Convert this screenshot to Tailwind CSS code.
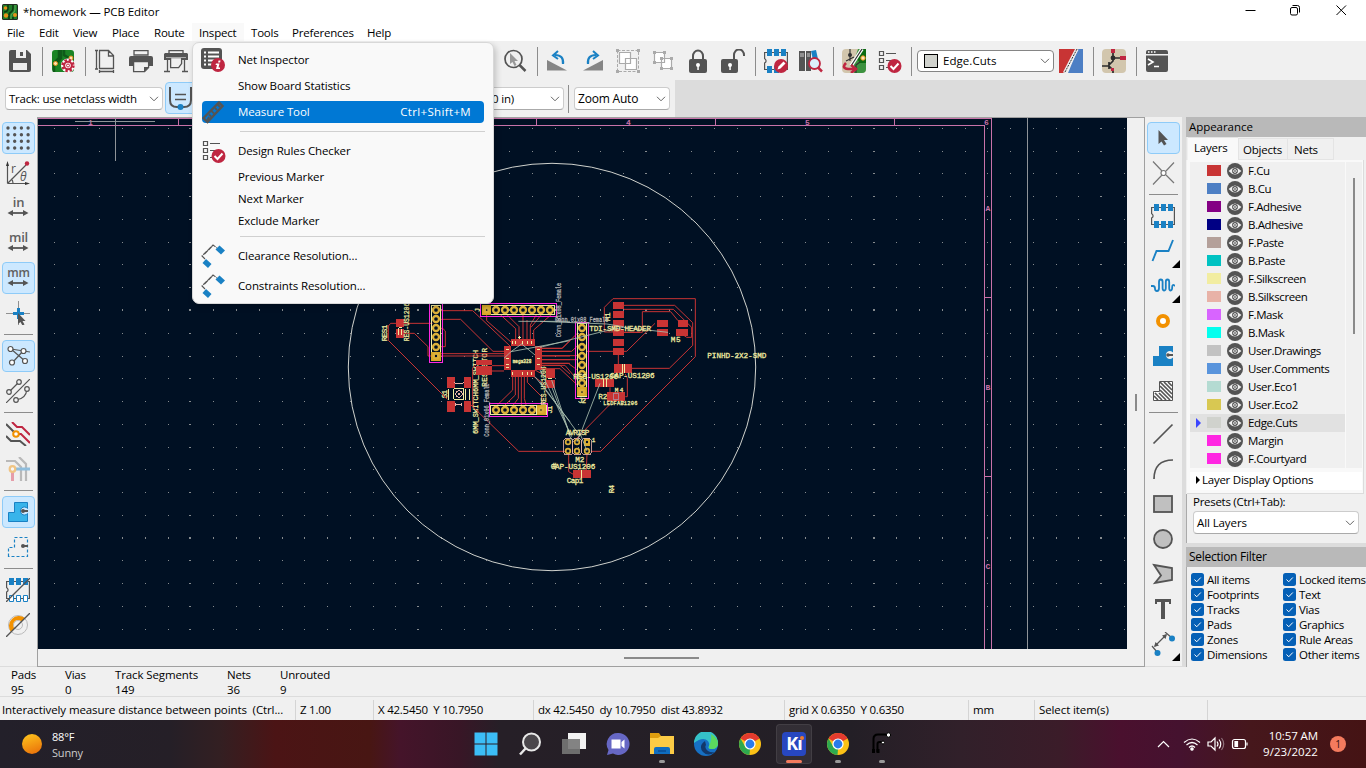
<!DOCTYPE html>
<html lang="en">
<head>
<meta charset="utf-8">
<title>homework — PCB Editor</title>
<script src="https://cdn.jsdelivr.net/npm/@tailwindcss/browser@4"></script>
</head>
<body class="w-[1366px] h-[768px] overflow-hidden bg-[#f0f0f0] text-black text-[11.5px] leading-[16px] tracking-[-0.2px] font-['Open_Sans','Noto_Sans',sans-serif] flex flex-col relative whitespace-nowrap">

<svg class="hidden">
  <defs>
    <symbol id="eye" viewBox="0 0 16 16"><circle cx="8" cy="8" r="8" fill="#545454"/><path d="M1.600 8Q8 1 14.400 8Q8 15 1.600 8Z" fill="#f0f0f0"/><circle cx="8" cy="8" r="2.900" fill="#545454"/><circle cx="8" cy="8" r="1.400" fill="none" stroke="#f0f0f0" stroke-width=".9"/></symbol>
    <symbol id="chev" viewBox="0 0 10 6"><path d="M1 .8L5 4.800L9 .8" fill="none" stroke="#666" stroke-width="1"/></symbol>
    <symbol id="drc" viewBox="0 0 24 24"><g fill="none" stroke="#545454" stroke-width="1.200"><path d="M1.500 2.500h4v4h-4zM1.500 9.500h4v4h-4zM1.500 16.500h4v4h-4zM8 4.500h10M8 11.500h5M8 18.500h2"/></g><circle cx="16.500" cy="17" r="7" fill="#bf2641"/><path d="M12.500 17l3 3l5-5.500" fill="none" stroke="#fff" stroke-width="2"/></symbol>
    <symbol id="clr" viewBox="0 0 24 24"><path d="M4 15L1 12L12 1l4 3M3.500 10l8-8" fill="none" stroke="#545454" stroke-width="1.100" stroke-dasharray="5 1"/><path d="M18.500 1.500L24 6.500L20 10.500L14.500 5.500ZM5 15L10.500 20L7 24L1.500 19Z" fill="#1a81c4"/></symbol>
    <symbol id="dbl" viewBox="0 0 24 8"><path d="M5 4H19" stroke="#545454" stroke-width="1.800"/><path d="M1.500 4L7 1V7ZM22.500 4L17 1V7Z" fill="#545454"/></symbol>
    <symbol id="chrome" viewBox="0 0 24 24"><circle cx="12" cy="12" r="11" fill="#fbc116"/><path d="M12 12L2.500 6.500A11 11 0 0 1 21.500 6.500Z" fill="#e33b2e"/><path d="M12 1a11 11 0 0 1 9.600 6H12Z" fill="#e33b2e"/><path d="M2.500 6.500L7.700 15.500L12 17L11.500 23A11 11 0 0 1 2.500 6.500Z" fill="#2da94f"/><circle cx="12" cy="12" r="5.600" fill="#fff"/><circle cx="12" cy="12" r="4.400" fill="#2a7bea"/></symbol>
  </defs>
</svg>

<!-- Title bar -->
<header class="h-[23px] bg-white flex items-center shrink-0">
  <svg class="ml-[2px] w-4 h-4" viewBox="0 0 16 16"><rect width="16" height="16" rx="1.500" fill="#222d22"/><rect x="1" y="1" width="14" height="14" fill="#1f7d28"/><path d="M2 8q4 0 4-4V1M7 15v-4q0-2 2-3t2-4V1M11 15v-2" stroke="#0d3a12" stroke-width="1.600" fill="none"/><path d="M9 15v-3q0-2 2-3t2-4V1" stroke="#52a552" stroke-width="1.200" fill="none"/><circle cx="3.500" cy="4" r="1.800" fill="#e8921a"/><circle cx="4" cy="11.500" r="2.200" fill="#e8921a"/><circle cx="13" cy="11" r="2" fill="#e8921a"/></svg>
  <span class="ml-[5px] mt-px tracking-[-0.08px]">*homework — PCB Editor</span>
  <svg class="ml-auto mr-[17px] w-[105px] h-3 -mt-[3px]" viewBox="0 0 105 12" fill="none" stroke="#000" stroke-width="1"><path d="M1.500 6.500h10M92.500 1.500l9.500 9.500M102 1.500l-9.500 9.500"/><rect x="46.500" y="3.500" width="7" height="7.500" rx="1.500"/><path d="M48.500 1.500h5q2 0 2 2v5"/></svg>
</header>

<!-- Menu bar -->
<nav class="h-[18px] bg-white flex shrink-0 pl-px leading-[20px]">
  <span class="w-[32px] pl-[6px]">File</span><span class="w-[34px] pl-[6px]">Edit</span><span class="w-[39px] pl-[6px]">View</span><span class="w-[42px] pl-[6px]">Place</span><span class="w-[44px] pl-[6px]">Route</span><span class="w-[52px] h-full bg-[#f9f9f9] pl-[7px]">Inspect</span><span class="w-[41px] pl-[7px]">Tools</span><span class="w-[75px] pl-[7px] tracking-[-0.2px]">Preferences</span><span class="pl-[7px]">Help</span>
</nav>

<!-- Main toolbar -->
<div class="h-[39px] shrink-0 flex items-start pl-[3px] [&>svg]:w-6 [&>svg]:h-6 [&>svg]:ml-[5px] [&>svg]:mr-[6px] [&>svg]:mt-2 [&>svg]:shrink-0 [&>i]:w-px [&>i]:h-[29px] [&>i]:bg-[#8c8c8c] [&>i]:ml-1 [&>i]:mr-[3px] [&>i]:mt-[6px] [&>i]:shrink-0">
  <svg viewBox="0 0 24 24"><path fill="#545454" d="M1 3a2 2 0 0 1 2-2h16l4 4v16a2 2 0 0 1-2 2H3a2 2 0 0 1-2-2Z"/><path fill="#f0f0f0" d="M8 1h10v8H8zM5 14h14v7H5z"/><path fill="#545454" d="M12 3h3v4h-3z"/></svg>
  <i></i>
  <svg viewBox="0 0 24 24"><rect x="1" y="1" width="22" height="22" rx="3" fill="#1b8425"/><path d="M3 23V14l5-5V1M10 1v8l-4 5M13 1v5l5 3h5" stroke="#0f5a19" stroke-width="2.500" fill="none"/><circle cx="4.500" cy="14.500" r="2" fill="#ffe2b0" stroke="#e8921a"/><circle cx="20" cy="9" r="2" fill="#ffe2b0" stroke="#e8921a"/><circle cx="17" cy="16.500" r="7" fill="#fff"/><circle cx="17" cy="16.500" r="5.200" fill="none" stroke="#bf2641" stroke-width="3" stroke-dasharray="2.300 1.800"/><circle cx="17" cy="16.500" r="3.800" fill="#fff" stroke="#bf2641" stroke-width="2"/><circle cx="17" cy="16.500" r="1.500" fill="none" stroke="#bf2641"/></svg>
  <i></i>
  <svg viewBox="0 0 24 24" fill="none" stroke="#545454" stroke-width="1.300"><path d="M5.500 1.500h9l5 5v13h-14zM14.500 2v5h5M2.500 1v19M1 1.500h3M1 20h3M5 22.500h15M5.500 21v3M19.500 21v3"/></svg>
  <svg viewBox="0 0 24 24"><path d="M5 1.600h14V6H5z" fill="none" stroke="#545454" stroke-width="1.300"/><path d="M2 7h20q2 0 2 2v8h-4v-5H4v5H0V9q0-2 2-2Z" fill="#545454"/><path d="M4.600 12.600h15v6l-4 4h-11z" fill="#f0f0f0" stroke="#545454" stroke-width="1.300"/><path d="M15 23v-5h5z" fill="#545454"/></svg>
  <svg viewBox="0 0 24 24"><path d="M5 1.600h14V5H5zM3.500 11v11M20.500 11v11M0 22.500h6M18 22.500h6" fill="none" stroke="#545454" stroke-width="1.300"/><path d="M1 4h22l1 1v6H0V5z" fill="#545454"/><path d="M6.600 8.600h11v6l-3 4h-8z" fill="#f0f0f0" stroke="#545454" stroke-width="1.300"/><path d="M2 8.500h20" stroke="#aaa"/></svg>
  <div class="w-[304px] shrink-0"></div>
  <svg viewBox="0 0 24 24"><circle cx="10.500" cy="10" r="8.500" fill="none" stroke="#545454" stroke-width="1.700"/><path d="M16.500 16l6 6" stroke="#545454" stroke-width="2.500"/><path d="M7 4v11l2.500-2 2 4 2-1-2-4h3.500z" fill="#999"/></svg>
  <i></i>
  <svg viewBox="0 0 24 24"><path d="M1 11v10.500h20z" fill="#858585"/><path d="M17 15Q18 6 9 6" fill="none" stroke="#1a81c4" stroke-width="2.200"/><path d="M12 2L7 6.500L12 10" fill="none" stroke="#1a81c4" stroke-width="2"/></svg>
  <svg viewBox="0 0 24 24"><path d="M22 11v10.500H2z" fill="#858585"/><path d="M7 15Q6 6 15 6" fill="none" stroke="#1a81c4" stroke-width="2.200"/><path d="M12 2L17 6.500L12 10" fill="none" stroke="#1a81c4" stroke-width="2"/></svg>
  <svg viewBox="0 0 24 24"><path d="M1.500 1.500h21v21h-21z" fill="none" stroke="#aaa" stroke-dasharray="3 1.500"/><path d="M0 0h3v3H0zM21 0h3v3h-3zM0 21h3v3H0zM21 21h3v3h-3z" fill="#aaa"/><path d="M3.500 3.500h11v11h-11zM9.500 9.500h11v11h-11z" fill="#fff" stroke="#aaa" stroke-width="1.200"/></svg>
  <svg viewBox="0 0 24 24"><path d="M3.500 3.500h10v10h-10zM10.500 9.500h10v10h-10z" fill="#fff" stroke="#aaa" stroke-width="1.200"/><path d="M2 2h3v3H2zM12 2h3v3h-3zM2 12h3v3H2zM9 8h3v3H9zM19 8h3v3h-3zM9 18h3v3H9zM19 18h3v3h-3z" fill="#aaa"/></svg>
  <svg viewBox="0 0 24 24"><path d="M7 11V7a5 5.500 0 0 1 10 0v4" fill="none" stroke="#545454" stroke-width="2"/><rect x="3" y="10" width="18" height="14" rx="2" fill="#545454"/><circle cx="12" cy="16" r="2" fill="#fff"/><path d="M11.300 17h1.500v4h-1.500z" fill="#fff"/></svg>
  <svg viewBox="0 0 24 24"><path d="M13 11V6a5 5.500 0 0 1 10 0v1" fill="none" stroke="#545454" stroke-width="2"/><rect x="0" y="10" width="17" height="14" rx="2" fill="#545454"/><circle cx="9" cy="16" r="2" fill="#fff"/><path d="M8.300 17h1.500v4H8.300z" fill="#fff"/></svg>
  <i></i>
  <svg viewBox="0 0 24 24"><path d="M.6 3.500h22.800v17H.6V14q3-2 0-4.500z" fill="none" stroke="#545454" stroke-width="1.200"/><path d="M3 0h5v7H3zM10 0h5v7h-5zM17 0h5v7h-5zM3 17h5v7H3zM10 17h5v7h-5z" fill="#1a81c4"/><circle cx="17" cy="17" r="7" fill="#bf2641"/><path d="M13.500 20.500l1-3 5-5 2 2-5 5z" fill="#fff"/></svg>
  <svg viewBox="0 0 24 24"><path d="M0 2h6v20H0zM7 2h5v20H7z" fill="#545454"/><path d="M12 2l5-1 4 18-5 1z" fill="#1a81c4"/><path d="M1 5h4M1 7h4M8 5h3M8 7h3" stroke="#ccc"/><circle cx="15.500" cy="14.500" r="5.500" fill="#dceefa" stroke="#bf2641" stroke-width="1.800"/><path d="M19 18.500l4 4" stroke="#bf2641" stroke-width="2.500"/></svg>
  <i></i>
  <svg viewBox="0 0 24 24"><rect width="24" height="24" rx="4" fill="#d2c6ad"/><path d="M16 0h4q4 0 4 4v16q0 4-4 4h-8V12z" fill="#3c923f"/><path d="M20 0h4v14h-6l-3-4z" fill="#0c6b12"/><path d="M20 0L9 17" stroke="#fff" stroke-width="3.500"/><path d="M20 0L9 17M8 0v12M4 12l8-4M14 24v-8l4-3" stroke="#333" stroke-width="1.200" fill="none"/><circle cx="8" cy="6" r="2" fill="#333"/><circle cx="21" cy="9" r="2.200" fill="#ffe2b0" stroke="#e8921a"/><path d="M4 14q-5 5 2 6h7M9 16l5 4-5 4" fill="none" stroke="#bf2641" stroke-width="2.600"/></svg>
  <svg class="relative left-px"><use href="#drc"/></svg>
  <i></i>
  <div class="ml-[2px] mt-[9px] w-[137px] h-[22px] shrink-0 bg-white border border-[#858585] rounded-sm flex items-center pl-[6px]"><b class="w-[14px] h-[14px] bg-[#d0d2cd] border border-black"></b><span class="ml-[5px] tracking-[0.05px]">Edge.Cuts</span><svg class="ml-auto mr-[3px] w-[10px] h-[6px]"><use href="#chev"/></svg></div>
  <svg viewBox="0 0 24 24"><path d="M0 0h19L6 24H0z" fill="#c83434"/><path d="M19 0h5v24H9z" fill="#4d7fc4"/><path d="M18 0L5.500 24" stroke="#eee" stroke-width="3.500"/><path d="M18 0L5.500 24" stroke="#333" stroke-width="1" stroke-dasharray="2 1"/></svg>
  <i></i>
  <svg viewBox="0 0 24 24"><rect width="24" height="24" rx="4" fill="#d2c6ad"/><path d="M11 3v7M12 9h8M11 9v3l-4 4M0 17h7M7 13v7M7 17l4 4v3" stroke="#2c2c2c" stroke-width="1.700" fill="none"/><circle cx="11" cy="9" r="2.400" fill="#2c2c2c"/><path d="M9 0h4v4H9zM18 7h6v4h-6zM9 19h3v3H9z" fill="#bf2641"/></svg>
  <i></i>
  <svg viewBox="0 0 24 24"><path d="M1 5V3q0-2 2-2h18q2 0 2 2v2zM1 6.500h22V21q0 2-2 2H3q-2 0-2-2z" fill="#545454"/><path d="M3 10l5 3-5 3M9 17.500h5" stroke="#fff" stroke-width="1.600" fill="none"/><path d="M3 3h1.500M6 3h1.500M9 3h1.500" stroke="#fff" stroke-width="1.500"/></svg>
</div>

<!-- Track / zoom toolbar -->
<div class="h-[37px] shrink-0 flex bg-[#dcdcdc]">
  <div class="w-[675px] bg-[#f0f0f0] flex items-start">
    <div class="ml-[5px] mt-[7px] w-[158px] h-[23px] bg-white border border-[#ccc] border-b-[#aaa] rounded-sm flex items-center pl-[3px] tracking-[-0.22px]">Track: use netclass width<svg class="ml-auto mr-[3px] w-[10px] h-[6px]"><use href="#chev"/></svg></div>
    <div class="ml-[2px] mt-[2px] w-8 h-8 bg-[#cce8ff] border border-[#8ecbf8] rounded-sm"><svg class="w-[30px] h-[30px]" viewBox="0 0 30 30"><path d="M4 4v13q0 7 7 7h7q7 0 7-7V4" fill="none" stroke="#545454" stroke-width="2"/><path d="M9 11.500h11M9 16.500h11" stroke="#545454" stroke-width="1.300"/><circle cx="14.500" cy="24" r="3" fill="#1a81c4"/></svg></div>
    <div class="ml-[193px] mt-[7px] w-[174px] h-[23px] bg-white border border-[#ccc] border-b-[#aaa] rounded-sm flex items-center justify-end">100.00 mils (2.540 in)<svg class="ml-[36px] mr-[3px] w-[10px] h-[6px]"><use href="#chev"/></svg></div>
    <div class="ml-1 mt-[5px] w-px h-[28px] bg-[#8c8c8c]"></div>
    <div class="ml-[5px] mt-[7px] w-[96px] h-[23px] bg-white border border-[#ccc] border-b-[#aaa] rounded-sm flex items-center pl-[3px] text-[12px]">Zoom Auto<svg class="ml-auto mr-[3px] w-[10px] h-[6px]"><use href="#chev"/></svg></div>
  </div>
</div>

<!-- Work area -->
<main class="h-[550px] shrink-0 flex">
  <!-- Display options toolbar -->
  <div class="w-[37px] pt-[3px] border-b border-[#dcdcdc] flex flex-col [&>div]:ml-[2px] [&>div]:mt-[2px] [&>div]:mb-px [&>div]:w-[33px] [&>div]:h-[32px] [&>div]:p-[3px] [&>div]:border [&>div]:rounded-sm [&>div]:shrink-0 [&>i]:h-px [&>i]:w-[29px] [&>i]:ml-1 [&>i]:bg-[#8c8c8c] [&>i]:mt-[4px] [&>i]:mb-[3px] [&>i]:shrink-0 [&>div>svg]:w-6 [&>div>svg]:h-6">
    <div class="bg-[#cce8ff] border-[#8ecbf8]"><svg viewBox="0 0 24 24"><g stroke="#545454" stroke-width="3.400" stroke-linecap="round" stroke-dasharray="0 6.700"><path d="M2 2H23M2 8.700H23M2 15.300H23M2 22H23"/></g></svg></div>
    <div class="border-transparent"><svg viewBox="0 0 24 24"><path d="M1.500 22.500V3M1.500 22.500H21M2 22L20 4M7 22q0-3-2-4" fill="none" stroke="#545454" stroke-width="1.200"/><path d="M1.500 0L3 5H0ZM24 22.500L19 21v3z" fill="#333"/><circle cx="21" cy="2.500" r="2.200" fill="#bf2641"/><text x="5" y="12" font-size="12" fill="#545454">r</text><text x="14" y="20" font-size="12" font-style="italic" fill="#545454">θ</text></svg></div>
    <div class="border-transparent relative text-center text-[13px] leading-[12px] font-semibold text-[#606060] !px-0">in<svg class="absolute left-[3px] top-[16px] !h-[8px]"><use href="#dbl"/></svg></div>
    <div class="border-transparent relative text-center text-[13px] leading-[12px] font-semibold text-[#606060] !px-0">mil<svg class="absolute left-[3px] top-[16px] !h-[8px]"><use href="#dbl"/></svg></div>
    <div class="bg-[#cce8ff] border-[#8ecbf8] relative text-center text-[12px] leading-[14px] font-semibold text-[#606060] !px-0">mm<svg class="absolute left-[3px] top-[16px] !h-[8px]"><use href="#dbl"/></svg></div>
    <div class="border-transparent"><svg viewBox="0 0 24 24"><path d="M0 12.500h24M12.500 0v24" stroke="#777" stroke-width=".8"/><path d="M12.500 7v11M7 12.500h11" stroke="#1a81c4" stroke-width="3"/><path d="M12 12v11l2.500-2 2 3.500 2-1-2-3.500h3z" fill="#545454"/></svg></div>
    <i></i>
    <div class="bg-[#cce8ff] border-[#8ecbf8]"><svg viewBox="0 0 24 24" fill="#fff" stroke="#545454" stroke-width="1.200"><path d="M5 5l19 3M5 5l14 12M6 19L18 6"/><circle cx="4.500" cy="5" r="2.500"/><circle cx="17.500" cy="7" r="2.500"/><circle cx="6" cy="18.500" r="2.500"/><circle cx="19" cy="17" r="2.500"/></svg></div>
    <div class="border-transparent"><svg viewBox="0 0 24 24" fill="#f0f0f0" stroke="#545454" stroke-width="1.200"><path d="M0 24L24 0M4 12l8-8"/><path d="M10 21q10-1 11-11" fill="none"/><circle cx="3" cy="13" r="2.300"/><circle cx="13" cy="3" r="2.300"/><circle cx="10" cy="21" r="2.300"/><circle cx="21" cy="10" r="2.300"/></svg></div>
    <i></i>
    <div class="border-transparent"><svg viewBox="0 0 24 24" fill="none" stroke-width="2"><path d="M6 0l5 5h5l8 8M10 12h5l9 9" stroke="#bf2641"/><path d="M0 2l9 9M0 14l5 5h9l6 5" stroke="#545454"/><circle cx="10" cy="12" r="2.800" fill="#fff" stroke="#f29100"/></svg></div>
    <div class="border-transparent"><svg viewBox="0 0 24 24" fill="none" stroke-width="2.200" opacity=".45"><path d="M0 4h9l6 6v14M13 0l7 7v17" stroke="#777"/><path d="M8 12h16" stroke="#1a81c4" stroke-width="3"/><path d="M6.500 13v11" stroke="#dc3a55" stroke-width="3"/><circle cx="6.500" cy="12" r="2.800" fill="#fff" stroke="#f29100"/></svg></div>
    <i></i>
    <div class="bg-[#cce8ff] border-[#8ecbf8]"><svg viewBox="0 0 24 24"><path d="M2.500 21.500v-9h6v-10h13v6a4 4 0 1 0 0 5v8z" fill="#39b4ea" stroke="#1a81c4"/><path d="M17 11h5" stroke="#545454" stroke-width="2"/><circle cx="17" cy="11" r="2" fill="#545454"/></svg></div>
    <div class="border-transparent"><svg viewBox="0 0 24 24"><path d="M2.500 21.500v-9h6v-10h13v19z" fill="none" stroke="#1a81c4" stroke-width="1.200" stroke-dasharray="3 2"/><path d="M17 11h5" stroke="#545454" stroke-width="2"/><circle cx="17" cy="11" r="2" fill="#545454"/></svg></div>
    <i></i>
    <div class="border-transparent"><svg viewBox="0 0 24 24"><path d="M.6 3.500h22.800v17H.6V14q3-2 0-4.500z" fill="none" stroke="#545454" stroke-width="1.200"/><path d="M3 0h5v7H3zM10 0h5v7h-5zM17 0h5v7h-5z" fill="#1a81c4"/><path d="M3.500 17.500h4v6h-4zM10.500 17.500h4v6h-4zM17.500 17.500h4v6h-4z" fill="#fff" stroke="#1a81c4"/><path d="M0 24L24 0" stroke="#545454" stroke-width="1.300"/></svg></div>
    <div class="border-transparent"><svg viewBox="0 0 24 24"><circle cx="12" cy="12" r="9.500" fill="none" stroke="#bbb"/><circle cx="12" cy="12" r="4.500" fill="none" stroke="#bbb"/><path d="M5 19A10 10 0 0 1 19 5L15.500 8.500A4.500 4.500 0 0 0 8.500 15.500Z" fill="#f29100"/><path d="M0 24L24 0" stroke="#545454" stroke-width="1.300"/></svg></div>
  </div>

  <!-- Board canvas with its scrollbars -->
  <div class="w-[1108px] border border-[#a0a0a0] grid grid-cols-[1089px_1fr] grid-rows-[531px_1fr]">
    <svg id="board" class="w-[1089px] h-[531px] bg-[#001023] tracking-normal" viewBox="38 118 1089 531" font-family="'Liberation Mono',monospace" shape-rendering="crispEdges">
      <path id="dots" fill="#868b8e"/>
      <g fill="none" stroke="#c872a9"><path d="M38 118.500H991.500V649M38 125.500H984.500V649M178.500 118v7M536.500 118v7M715.500 118v7M894.500 118v7M984 297.500h7M984 476.500h7"/></g>
      <g fill="#c872a9" font-size="8" font-weight="bold"><text x="88" y="125">1</text><text x="626" y="125">4</text><text x="805" y="125">5</text><text x="984" y="125">6</text><text x="985.500" y="211">A</text><text x="985.500" y="390">B</text><text x="985.500" y="569">C</text></g>
      <path d="M75 121.500h80M115.500 118v43M1027.500 118v531" stroke="#8f9498"/>
      <circle cx="552" cy="367" r="203.700" fill="none" stroke="#d0d2cd" shape-rendering="auto"/>

      <!-- left half of the board -->
      <g transform="translate(370 270) scale(.33333)">
        <g fill="#f2eda1" stroke="#f2eda1" stroke-width=".8" font-size="23">
          <text transform="translate(50 214) rotate(-90)" textLength="50">RES1</text>
          <text transform="translate(230 385) rotate(-90)" textLength="25">S1</text>
          <text transform="translate(323 492) rotate(-90)" textLength="252" lengthAdjust="spacingAndGlyphs">6MM_SWITCH6MM_SWITCH</text>
          <text transform="translate(350 350) rotate(-90)" textLength="116">RESISTOR</text>
          <text transform="translate(547 431) rotate(-90)" textLength="24">J1</text>
        </g>
        <g fill="none" stroke="#c83434" stroke-width="3" shape-rendering="auto">
          <path d="M78 160H62L55 168V211L232 388M303 405L446 544H512M102 160H188M102 190H133L174 230V258H186M212 122H308L420 228M212 148H272L369 244H402M212 175H218L226 183V230H212M212 251H402M212 258H402M366 287H402M366 303H402M317 285L308 294V410"/>
          <path d="M350 133V152L425 218M390 133L437 176V207M410 133L447 170V207M459 130V207M471 150V207M500 133L481 165V207M515 133L483 172M545 133L491 180V207"/>
          <path d="M516 235H577L600 212M516 244H600M516 258H600M516 269H600M516 280H600M516 286H570L600 312M495 300L527 318"/>
          <path d="M428 320V360L382 405M436 320V375L405 405M445 320V385L430 405M454 320V405M463 320V385L468 405M472 320V337L515 380V405M492 320L527 345"/>
        </g>
        <g fill="none" stroke="#ff26e2" stroke-width="3"><rect x="179" y="102" width="38" height="175"/><rect x="331" y="101" width="228" height="38"/><rect x="359" y="401" width="174" height="38"/></g>
        <g fill="none" stroke="#f2eda1" stroke-width="3"><rect x="185" y="107" width="27" height="164"/><rect x="337" y="106" width="217" height="29"/><rect x="363" y="406" width="166" height="29"/><path d="M500 406v29"/></g>
        <path d="M184 246h28v26h-28zM336 106h28v28h-28zM500 406h27v28h-27z" fill="#d9a927"/>
        <g fill="#001023" stroke="#dcb13a" stroke-width="7" shape-rendering="auto"><circle cx="198" cy="120" r="9"/><circle cx="198" cy="147" r="9"/><circle cx="198" cy="174" r="9"/><circle cx="198" cy="201" r="9"/><circle cx="198" cy="231" r="9"/><circle cx="198" cy="258" r="7"/><circle cx="378" cy="120" r="9"/><circle cx="405" cy="120" r="9"/><circle cx="432" cy="120" r="9"/><circle cx="459" cy="120" r="9"/><circle cx="486" cy="120" r="9"/><circle cx="513" cy="120" r="9"/><circle cx="540" cy="120" r="9"/><circle cx="350" cy="120" r="6"/><circle cx="378" cy="420" r="9"/><circle cx="405" cy="420" r="9"/><circle cx="432" cy="420" r="9"/><circle cx="459" cy="420" r="9"/><circle cx="486" cy="420" r="9"/><circle cx="513" cy="420" r="6"/></g>
        <path d="M78 147h24v24H78zM78 178h24v25H78zM231 321h24v33h-24zM281 321h22v33h-22zM231 393h24v32h-24zM281 393h22v32h-22zM317 270h49v15h-49zM317 288h49v26h-49zM423 207h72v21h-72zM423 300h72v21h-72zM402 228h21v72h-21zM495 228h21v72h-21zM527 297h27v27h-27zM527 330h27v23h-27z" fill="#c83434"/>
        <g fill="none" stroke="#f2eda1" stroke-width="3"><path d="M252 357h30v31h-30zM237 357v33M288 357v33M298 357v33M87 173h9M87 173v22M96 178v16M428 213v10M438 213v10M458 213v10M472 213v10M485 213v10M428 305v10M458 305v10M472 305v10M485 305v10M408 240h10M408 266h10M408 283h10M408 293h10M500 240h10M500 266h10M500 283h10M535 327h12M449 198v10M445 203h8"/></g>
        <g fill="none" stroke="#e8b2a7" stroke-width="3"><circle cx="267" cy="372" r="10"/><path d="M258 342h18M258 403h18M252 336l6 6M282 336l-6 6M258 398v10M276 398v10"/></g><circle cx="267" cy="372" r="4" fill="#e8b2a7"/>
        <path d="M423 245L455 222L495 255M423 245L600 212M445 154H600M495 320L600 455M545 350L600 495M423 245L402 265" stroke="#a9bfb0" stroke-width="2.500" fill="none" shape-rendering="auto"/>
        <g fill="#f2eda1" stroke="#f2eda1" stroke-width=".8" font-size="23">
          <text transform="translate(117 214) rotate(-90)" textLength="116" lengthAdjust="spacingAndGlyphs">RES-US1206</text>
          <text transform="translate(528 405) rotate(-90)" textLength="116" lengthAdjust="spacingAndGlyphs">RES-US1206</text>
          <text transform="translate(331 126) rotate(-90)" font-size="20">J</text>
          <text x="428" y="279" font-size="17" font-weight="bold" textLength="56" lengthAdjust="spacingAndGlyphs">mega328</text>
        </g>
        <g fill="#b4b4b4" stroke="#b4b4b4" stroke-width=".8" font-size="19"><text transform="translate(357 500) rotate(-90)" textLength="160" lengthAdjust="spacingAndGlyphs">Conn_01x06_Female</text><text transform="translate(573 202) rotate(-90)" textLength="164" lengthAdjust="spacingAndGlyphs">Conn_01x08_Female</text></g>
      </g>

      <!-- right half of the board -->
      <g transform="translate(540 270) scale(.33333)">
        <g fill="none" stroke="#c83434" stroke-width="3" shape-rendering="auto">
          <path d="M219 86H466V260L182 544H153M219 86L193 112V186H219M252 106H404L458 158V226L388 295H276M252 118H400L455 172V202H440L430 195M252 187H307V125H392L414 152M252 187H300M252 244H260L345 160M141 244H219M235 255V282M256 312L262 325V380H256M210 352V366M213 400L100 515M0 544H84M86 553V605L100 613M141 553L139 600"/>
          <path d="M0 235H66L112 190M0 244H95L112 228M0 257H112M0 269H112M0 280H85L112 300M0 286H75L112 330M0 296H60L112 345"/>
        </g>
        <rect x="107" y="157" width="38" height="228" fill="none" stroke="#ff26e2" stroke-width="3"/>
        <rect x="113" y="162" width="27" height="217" fill="none" stroke="#f2eda1" stroke-width="3"/>
        <path d="M112 352h28v27h-28zM132 503h18v26h-18z" fill="#d9a927"/>
        <g fill="#001023" stroke="#dcb13a" stroke-width="7" shape-rendering="auto"><circle cx="126" cy="174" r="9"/><circle cx="126" cy="201" r="9"/><circle cx="126" cy="231" r="9"/><circle cx="126" cy="258" r="9"/><circle cx="126" cy="285" r="9"/><circle cx="126" cy="312" r="9"/><circle cx="126" cy="339" r="9"/><circle cx="126" cy="366" r="6"/></g>
        <g fill="#001023" stroke="#dcb13a" stroke-width="5" shape-rendering="auto"><circle cx="84" cy="516" r="7"/><circle cx="111" cy="516" r="7"/><circle cx="141" cy="516" r="6"/><circle cx="84" cy="543" r="7"/><circle cx="111" cy="543" r="7"/><circle cx="141" cy="543" r="7"/></g>
        <path d="M76 505h18l5 6v38l-5 6H76l-5-6v-38zM103 505h16l5 6v38l-5 6h-16l-4-6v-38zM131 505h18l5 6v38l-5 6h-18l-5-6v-38z" fill="none" stroke="#e8b2a7" stroke-width="2.500"/>
        <path d="M219 96h33v21h-33zM219 123h33v21h-33zM219 150h33v21h-33zM219 177h33v21h-33zM219 207h33v21h-33zM219 234h33v21h-33zM222 282h54v27h-54zM351 150h33v21h-33zM351 177h33v21h-33zM414 150h30v21h-30zM408 177h36v21h-36zM165 327h57v24h-57zM201 366h55v27h-55zM100 600h53v24h-53zM18 297h26v27H18zM18 330h26v23H18z" fill="#c83434"/>
        <path d="M245 282h3v27h-3zM252 282h3v27h-3zM190 327h3v24h-3zM197 327h3v24h-3zM124 600h3v24h-3z" fill="#f2eda1"/>
        <rect x="220" y="370" width="17" height="19" fill="none" stroke="#a9a0b8" stroke-width="2"/>
        <path d="M0 232L195 183L250 172L384 187M0 154L200 162L250 170M0 335L118 495M0 300L95 500M35 330L90 495M180 340L118 500M111 516L120 490L141 543M100 516L84 490" stroke="#a9bfb0" stroke-width="2.500" fill="none" shape-rendering="auto"/>
        <g fill="#f2eda1" stroke="#f2eda1" stroke-width=".8" font-size="23">
          <text x="148" y="182" textLength="185">TDI-SMD-HEADER</text>
          <text x="392" y="216" textLength="30">M5</text>
          <text x="502" y="264" textLength="177">PINHD-2X2-SMD</text>
          <text x="100" y="326" textLength="134">RES-US1206</text><text x="210" y="323" textLength="134">CAP-US1206</text>
          <text transform="translate(211 154) rotate(-90)" textLength="27">M1</text>
          <text x="175" y="388" textLength="27">R2</text><text x="224" y="366" font-size="18" textLength="26">M4</text>
          <text x="190" y="404" font-size="16" textLength="102">LEDFAB1206</text>
          <text x="115" y="399" textLength="23">J2</text>
          <text x="77" y="496" textLength="71">AVRISP</text><text x="155" y="516" font-size="18">1</text>
          <text x="106" y="577" textLength="27">M2</text>
          <text x="32" y="598" textLength="134">CAP-US1206</text><text x="36" y="595">#</text>
          <text x="80" y="639" textLength="50">Cap1</text>
          <text transform="translate(223 670) rotate(-90)" textLength="25">R4</text>
        </g>
        <text x="45" y="157" fill="#b4b4b4" stroke="#b4b4b4" stroke-width=".8" font-size="19" textLength="160" lengthAdjust="spacingAndGlyphs">Conn_01x08_Female</text>
      </g>
    </svg>
    <div class="flex items-center pl-2 pt-[37px]"><div class="w-[2px] h-[17px] bg-[#8a8a8a]"></div></div>
    <div class="flex pl-[586px] pt-2"><div class="w-[75px] h-[2px] bg-[#8a8a8a]"></div></div>
  </div>

  <!-- Drawing tools -->
  <div class="w-[37px] pt-[3px] border-b border-[#dcdcdc] flex flex-col [&>div]:relative [&>div]:ml-[2px] [&>div]:mt-[2px] [&>div]:mb-px [&>div]:w-[33px] [&>div]:h-[32px] [&>div]:p-[3px] [&>div]:border [&>div]:rounded-sm [&>div]:shrink-0 [&>i]:h-px [&>i]:w-[29px] [&>i]:ml-1 [&>i]:bg-[#8c8c8c] [&>i]:mt-[4px] [&>i]:mb-[3px] [&>i]:shrink-0 [&>div>svg]:w-6 [&>div>svg]:h-6 [&>div>b]:absolute [&>div>b]:right-[-1px] [&>div>b]:bottom-[-2px] [&>div>b]:border-[4px] [&>div>b]:border-l-transparent [&>div>b]:border-t-transparent">
    <div class="bg-[#cce8ff] border-[#8ecbf8]"><svg viewBox="0 0 24 24"><path d="M7.500 4v14l3-2.500 2.500 4 2.500-1.500-2.500-4h4z" fill="#545454"/></svg></div>
    <div class="border-transparent"><svg viewBox="0 0 24 24" fill="#fff" stroke="#777" stroke-width="1.200"><path d="M2 .5L11 10M15 14l8 8M2 23.500L11 14M15 10L23 1.500" /><circle cx="12.500" cy="12" r="2.500"/></svg></div>
    <i></i>
    <div class="border-transparent"><svg viewBox="0 0 24 24"><path d="M.6 3.500h22.800v17H.6V14q3-2 0-4.500z" fill="none" stroke="#545454" stroke-width="1.200"/><path d="M3 0h5v7H3zM10 0h5v7h-5zM17 0h5v7h-5zM3 17h5v7H3zM10 17h5v7h-5zM17 17h5v7h-5z" fill="#1a81c4"/></svg></div>
    <div class="border-transparent"><svg viewBox="0 0 24 24"><path d="M1.500 22L5.500 12H17.500L22 1" fill="none" stroke="#1a81c4" stroke-width="1.900"/></svg><b></b></div>
    <div class="border-transparent"><svg viewBox="0 0 24 24"><path d="M0 12h2q2 0 2 2.500t2 2.500q2 0 2-3V8q0-2.500 1.800-2.500T11.600 8v6q0 2.500 1.600 2.500T14.800 14V8q0-2.500 1.700-2.500T18.200 8v6q0 2.500 1.500 2.500T21.200 13t2.800-1" fill="none" stroke="#1a81c4" stroke-width="1.800"/></svg><b></b></div>
    <div class="border-transparent"><svg viewBox="0 0 24 24"><circle cx="12" cy="12" r="5" fill="#fff" stroke="#f29100" stroke-width="4"/></svg></div>
    <div class="border-transparent"><svg viewBox="0 0 24 24"><path d="M2 22V12h6V2h14v6.500a4 4 0 1 0 0 5V22z" fill="#1a81c4"/><path d="M17 11h5" stroke="#545454" stroke-width="2"/><circle cx="17" cy="11" r="1.800" fill="#545454"/></svg></div>
    <div class="border-transparent"><svg viewBox="0 0 24 24"><path d="M2.500 21.500v-9h6v-10h13v19z" fill="#fff" stroke="#545454"/><path d="M9 3L21 15M13 3l8 8M17 3l4 4M9 7L21 19M9 11L19 21M8 14l7 7M4 14l7 7M3 17l4 4" stroke="#545454" stroke-width="1.700"/></svg></div>
    <i></i>
    <div class="border-transparent"><svg viewBox="0 0 24 24"><path d="M2.500 21.500l19-19" stroke="#545454" stroke-width="1.700"/></svg></div>
    <div class="border-transparent"><svg viewBox="0 0 24 24"><path d="M3 22Q3 3 22 3" fill="none" stroke="#545454" stroke-width="1.700"/></svg></div>
    <div class="border-transparent"><svg viewBox="0 0 24 24"><rect x="3" y="4" width="18" height="16" fill="#c0c0c0" stroke="#545454" stroke-width="1.800"/></svg></div>
    <div class="border-transparent"><svg viewBox="0 0 24 24"><circle cx="12" cy="12" r="9" fill="#c0c0c0" stroke="#545454" stroke-width="1.800"/></svg></div>
    <div class="border-transparent"><svg viewBox="0 0 24 24"><path d="M3 3L21 6V18L4 21L10 13.500Z" fill="#c0c0c0" stroke="#545454" stroke-width="1.800"/></svg></div>
    <div class="border-transparent"><svg viewBox="0 0 24 24"><path d="M4 2h16v5h-2V5h-4v17h-4V5H6v2H4z" fill="#545454"/></svg></div>
    <div class="border-transparent"><svg viewBox="0 0 24 24"><path d="M4 14L15 3M1 14l5 6M14 0l7 6" fill="none" stroke="#545454" stroke-width="1.200"/><path d="M3 15l1.500-5 3.500 3.500zM16 2l-5 1.500 3.500 3.500z" fill="#545454"/><circle cx="21" cy="6.500" r="3" fill="#1a81c4"/><circle cx="6.500" cy="21" r="3" fill="#1a81c4"/></svg><b></b></div>
  </div>
  <div class="w-1 bg-[#dcdcdc]"></div>

  <!-- Side panel -->
  <aside class="w-[180px] flex flex-col text-[11.5px]">
    <div class="h-5 bg-[#b9b9b9] pl-[3px] leading-[20px] tracking-[-0.05px] shrink-0">Appearance</div>
    <div class="h-[23px] flex items-end pl-px shrink-0 border-l border-[#e4e4e4]">
      <div class="w-[50px] h-[23px] bg-[#f9f9f9] pl-[6px] leading-[19px] border-t border-[#e4e4e4]">Layers</div>
      <div class="w-[50px] h-[22px] pl-1 border border-[#e4e4e4] leading-[21px]">Objects</div>
      <div class="w-[46px] h-[22px] pl-[6px] border border-l-0 border-[#e4e4e4] leading-[21px]">Nets</div>
    </div>
    <div class="w-[177px] h-[334px] ml-px shrink-0 bg-[#f9f9f9] border-r border-b border-[#dcdcdc] pl-[3px] pr-px pt-[2px] flex flex-col">
      <div class="h-[306px] shrink-0 flex gap-px"><div id="layers" class="w-[155px] shrink-0 bg-[#f0f0f0]"></div><div class="w-[16px] shrink-0 bg-[#f0f0f0] pl-[7px] pt-[16px]"><div class="w-[2px] h-[156px] bg-[#8a8a8a]"></div></div></div>
      <div class="mt-[4px] h-[18px] bg-white flex items-center pl-[6px] leading-[14px] pb-[2px] tracking-[-0.25px]"><b class="border-y-[4px] border-l-[4px] border-y-transparent border-l-black mr-[2px]"></b>Layer Display Options</div>
    </div>
    <div class="h-[49px] border-l border-[#aaa] pl-[6px] shrink-0 tracking-[-0.28px]">Presets (Ctrl+Tab):
      <div class="mt-px w-[166px] h-[23px] bg-white border border-[#ccc] border-b-[#aaa] rounded-sm flex items-center pl-[3px] tracking-[-0.1px]">All Layers<svg class="ml-auto mr-[3px] w-[10px] h-[6px]"><use href="#chev"/></svg></div>
    </div>
    <div class="h-1 bg-[#dcdcdc] shrink-0"></div>
    <div class="h-5 bg-[#b9b9b9] pl-[3px] leading-[20px] text-[12px] tracking-[-0.28px] shrink-0">Selection Filter</div>
    <div id="filter" class="grow grid grid-cols-[92px_1fr] auto-rows-[15px] pl-1 pt-[5px] border-l border-[#aaa] overflow-hidden tracking-[-0.32px]"></div>
  </aside>
</main>

<!-- Board summary -->
<div class="h-[30px] shrink-0 flex leading-[15px] pl-[11px] border-b border-[#dcdcdc]">
  <div class="w-[54px]">Pads<br>95</div><div class="w-[50px]">Vias<br>0</div><div class="w-[112px] tracking-[-0.12px]">Track Segments<br>149</div><div class="w-[53px]">Nets<br>36</div><div>Unrouted<br>9</div>
</div>

<!-- Status bar -->
<div class="h-[23px] shrink-0 flex items-center pt-[2px] whitespace-pre tracking-[-0.25px] [&>div]:border-r [&>div]:border-[#d4d4d4] [&>div]:h-5 [&>div]:leading-[19px]"><div class="w-[296px] pl-[2px] tracking-[-0.1px]">Interactively measure distance between points  (Ctrl...</div><div class="w-[78px] pl-[4px]">Z 1.00</div><div class="w-[160px] pl-[4px]">X 42.5450  Y 10.7950</div><div class="w-[251px] pl-[4px]">dx 42.5450  dy 10.7950  dist 43.8932</div><div class="w-[184px] pl-[4px]">grid X 0.6350  Y 0.6350</div><div class="w-[66px] pl-[4px]">mm</div><div class="w-[173px] pl-[4px] tracking-[-0.1px]">Select item(s)</div></div>

<!-- Taskbar -->
<footer class="h-12 shrink-0 flex items-center text-white bg-[linear-gradient(90deg,#23202a_0px,#251f27_170px,#331f22_220px,#4b1415_275px,#481613_370px,#45142a_400px,#381626_460px,#261f27_500px,#231f26_850px,#31202a_960px,#3b1c29_1060px,#4a102e_1120px,#45122f_1180px,#46171c_1250px,#451314_1366px)]">
  <div class="w-5 h-5 rounded-full ml-[22px] bg-linear-[160deg,#ffc81e,#e86a08]"></div>
  <div class="ml-[10px] w-[60px] text-[11px] leading-[16px] mt-[2px]">88°F<br><span class="text-[#ccc]">Sunny</span></div>
  <div class="ml-[360px] flex w-[420px] [&>div]:w-11 [&>div]:h-10 [&>div]:shrink-0 [&>div]:flex [&>div]:items-center [&>div]:justify-center [&>div]:relative [&_svg]:w-6 [&_svg]:h-6 [&_b]:absolute [&_b]:bottom-px [&_b]:h-[3px] [&_b]:w-[6px] [&_b]:rounded-full [&_b]:bg-[#999] -ml-px">
    <div class="-ml-[8px]"><svg viewBox="0 0 24 24"><path d="M.5.500h11v11H.5zM12.500.500h11v11h-11zM.5 12.500h11v11H.5zM12.500 12.500h11v11h-11z" fill="#3cbdf6"/></svg></div>
    <div><svg viewBox="0 0 24 24"><circle cx="13.500" cy="10" r="8.500" fill="#4b474c" stroke="#e8e8e8" stroke-width="2"/><path d="M7.500 16.500L2 22.500" stroke="#e8e8e8" stroke-width="2.500"/></svg></div>
    <div><svg viewBox="0 0 24 24"><path d="M6 1h18v16H6z" fill="#f2f2f2"/><path d="M0 7h18v15H0z" fill="#777" opacity=".9"/></svg></div>
    <div><svg viewBox="0 0 24 24"><path d="M12 1a11 11 0 1 1-5 20.500L1 23l1.500-5A11 11 0 0 1 12 1Z" fill="#6667c4"/><path d="M5.500 7.500h9v9h-9zM15.500 10l3-2.500v9l-3-2.500z" fill="#fff"/></svg></div>
    <div><svg viewBox="0 0 24 24"><path d="M0 1h9l2 3h13v18H0z" fill="#dd9d0f"/><path d="M0 6h8l3-2h13v18H0z" fill="#fccb45"/><path d="M4 22v-5q0-2 2-2h12q2 0 2 2v5z" fill="#0f6dc0"/><path d="M8 19h8" stroke="#0a4c94" stroke-width="1.500"/></svg><b></b></div>
    <div><svg viewBox="0 0 24 24"><circle cx="12" cy="12" r="12" fill="#1670c4"/><path d="M0 11A12 12 0 0 1 24 11q0 6-6 6-5 0-3-3 1-2-1-5Q9 4 0 11Z" fill="#35c2c9"/><path d="M17 2q7 4 7 10-1 5-6 5-4 0-3-3 3-6 2-12Z" fill="#5bd95e"/><path d="M11 9q-7 5-2 11 5 5 12 0-4 1-7-1-4-3-2-6z" fill="#12386b"/></svg></div>
    <div><svg><use href="#chrome"/></svg></div>
    <div><span class="w-9 h-10 rounded bg-white/7 border border-white/8 flex items-center justify-center"><span class="w-6 h-6 rounded bg-[#2747c0] text-[18px] leading-[23px] font-bold text-center tracking-[-1px] relative">Kı<em class="absolute right-[2px] top-[4px] w-1 h-1 rounded-full bg-[#ef7a2c]"></em></span></span><b class="!bg-[#f47b5e] !w-4 !bottom-px"></b></div>
    <div><svg><use href="#chrome"/></svg><b></b></div>
    <div><svg viewBox="0 0 24 24"><path d="M3.500 20V7q0-4.500 4.500-4.500h9M7.500 20v-8q0-2 2-2h3" fill="none" stroke="#000" stroke-width="2"/><circle cx="18.500" cy="3" r="2.200" fill="#fff" stroke="#000"/><circle cx="13" cy="10.500" r="1.500" fill="#fff" stroke="#000"/><path d="M2 17h3v4H2zM6.500 17h3v4h-3z"/></svg><b></b></div>
  </div>
  <svg class="w-[94px] h-4 ml-[264px]" viewBox="0 0 94 16" fill="none" stroke="#fff" stroke-width="1.200"><path d="M2 11l5.500-5.500L13 11"/><path d="M28 6.500q8-7 16 0M30.500 9q5.500-5 11 0M33 11.500q3-3 6 0"/><circle cx="36" cy="13" r="1.200" fill="#fff"/><path d="M52 6h3l4-4v12l-4-4h-3zM61 5.500q2 2.500 0 5M63 3.500q3.500 4.500 0 9"/><path d="M65.500 2q4.500 6 0 12" opacity=".4"/><rect x="76.500" y="3.500" width="13" height="9" rx="2"/><path d="M91 6.500v3"/><path d="M79 5.500h2.500v5H79z" fill="#fff"/></svg>
  <div class="w-[68px] text-right text-[11.5px] leading-[16px] tracking-[0.05px]"><span class="tracking-[-0.1px]">10:57 AM</span><br>9/23/2022</div>
  <div class="ml-[12px] w-4 h-4 rounded-full bg-[#f47b5e] text-[#331111] text-center text-[10px]">1</div>
</footer>

<!-- Open Inspect menu -->
<div class="absolute left-[192px] top-[42px] w-[302px] h-[262px] rounded-[7px] bg-[#f9f9f9] border border-[#d8d8d8] shadow-[2px_3px_6px_rgba(0,0,0,0.2)] pl-[8px] pr-[9px] pt-[2px] tracking-[-0.12px] flex flex-col [&>div]:flex [&>div]:items-center [&>div]:shrink-0 [&>div]:rounded [&>div]:pl-[37px] [&>div]:relative [&>hr]:ml-[39px] [&>hr]:border-[#d0d0d0] [&>hr]:mr-[-1px] [&>div>svg]:absolute [&>div>svg]:left-0 [&>div>svg]:w-6 [&>div>svg]:h-6">
  <div class="h-[30px]"><svg viewBox="0 0 24 24"><rect y="0" width="21" height="21" rx="3" fill="#545454"/><path d="M3 4.500h2M7 4.500h11M3 8.500h2M7 8.500h11M3 12.500h2M7 12.500h8M3 16.500h2M7 16.500h4" stroke="#fff" stroke-width="1.800"/><circle cx="17" cy="17" r="7" fill="#bf2641"/><path d="M17.500 12.500h2l-.4 2h-2zM15 15.500h3.500l-1 4h1.500v1.500h-4l1-4h-1.500z" fill="#fff"/></svg>Net Inspector</div>
  <div class="h-[22px]">Show Board Statistics</div>
  <div class="h-[22px] mt-[4px] ml-px !pl-[36px] bg-[#0078d4] text-white"><svg viewBox="0 0 24 24"><path d="M1.500 18L17 2.500L20.500 6L5.500 22Z" fill="none" stroke="#545454" stroke-width="2.400"/><path d="M5.500 20l1.500-3M9 16.500l-2-2M12 13.500l-2.500-2.500M15 10l-2-2M18 7l-2.500-2.500" stroke="#545454" stroke-width="1.800"/></svg>Measure Tool<span class="ml-auto mr-[13px] tracking-[0.35px]">Ctrl+Shift+M</span></div>
  <hr class="mt-2">
  <div class="h-[30px] mt-[4px]"><svg class="ml-px"><use href="#drc"/></svg>Design Rules Checker</div>
  <div class="h-[22px]">Previous Marker</div>
  <div class="h-[22px]">Next Marker</div>
  <div class="h-[22px]">Exclude Marker</div>
  <hr class="mt-[4px]">
  <div class="h-[30px] mt-[4px]"><svg><use href="#clr"/></svg>Clearance Resolution...</div>
  <div class="h-[30px]"><svg><use href="#clr"/></svg>Constraints Resolution...</div>
</div>

<script>
  const layers = [['F.Cu','#c83434'],['B.Cu','#4d7fc4'],['F.Adhesive','#840084'],['B.Adhesive','#000084'],['F.Paste','#b4a09a'],['B.Paste','#00c2c2'],['F.Silkscreen','#f2eda1'],['B.Silkscreen','#e8b2a7'],['F.Mask','#d864ff'],['B.Mask','#02ffee'],['User.Drawings','#c2c2c2'],['User.Comments','#5994dc'],['User.Eco1','#b4dbd2'],['User.Eco2','#d8c852'],['Edge.Cuts','#d0d2cd'],['Margin','#ff26e2'],['F.Courtyard','#ff26e2']];
  document.getElementById('layers').innerHTML = layers.map(([n, c]) =>
    `<div class="h-[18px] flex items-center tracking-[-0.4px] ${n === 'Edge.Cuts' ? 'bg-[#e1e1e1]' : ''}"><b class="ml-[6px] border-y-[5px] border-l-[5px] border-y-transparent ${n === 'Edge.Cuts' ? 'border-l-[#3c46ff]' : 'border-l-transparent'}"></b><b class="ml-[6px] w-[14px] h-[11px] mb-px" style="background:${c}"></b><svg class="ml-[6px] w-4 h-4"><use href="#eye"/></svg><span class="ml-[5px]">${n}</span></div>`).join('');
  const filters = ['All items','Locked items','Footprints','Text','Tracks','Vias','Pads','Graphics','Zones','Rule Areas','Dimensions','Other items'];
  document.getElementById('filter').innerHTML = filters.map(n =>
    `<div class="flex items-center"><svg class="w-[13px] h-[13px] shrink-0" viewBox="0 0 13 13"><rect width="13" height="13" rx="2.500" fill="#0560b6"/><path d="M3.500 6.500l2.200 2.300L9.800 4.500" fill="none" stroke="#fff"/></svg><span class="ml-[3px]">${n}</span></div>`).join('');
  // Grid dots; every tenth row and column is drawn thicker.
  let d = '';
  for (let j = 0; j < 23; j++) for (let i = 0; i < 48; i++) {
    const w = i % 10 === 6 ? 2 : 1, h = j % 10 === 8 ? 2 : 1;
    d += `M${Math.floor(54.3 + i * 22.77) - w + 1} ${Math.floor(128.3 + j * 22.77) - h + 1}h${w}v${h}h-${w}z`;
  }
  document.getElementById('dots').setAttribute('d', d);
</script>
</body>
</html>
